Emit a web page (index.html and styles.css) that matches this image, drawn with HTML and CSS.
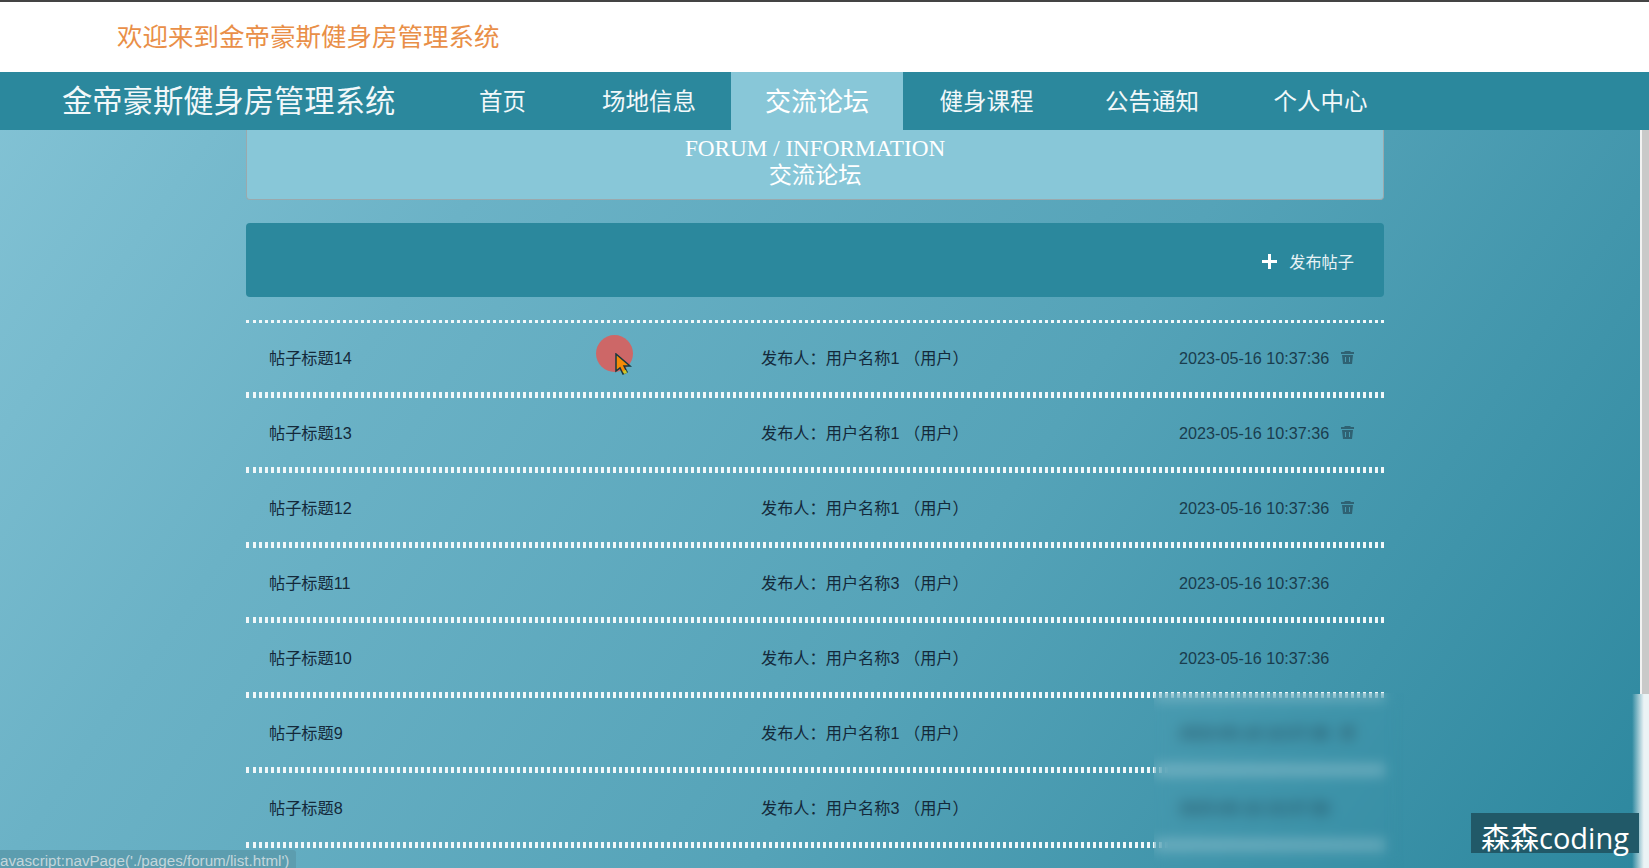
FILE: index.html
```html
<!DOCTYPE html>
<html lang="zh">
<head>
    <meta charset="UTF-8">
    <title>交流论坛</title>
    <link rel="stylesheet" href="styles.css">
</head>
<body>
    <div class="top">欢迎来到金帝豪斯健身房管理系统</div>
    <div class="nav">
        <div class="logo">金帝豪斯健身房管理系统</div>
        <ul class="menu">
            <li>首页</li>
            <li>场地信息</li>
            <li class="active">交流论坛</li>
            <li>健身课程</li>
            <li>公告通知</li>
            <li>个人中心</li>
        </ul>
    </div>
    <div class="main">
        <div class="title">
            <div class="title-en">FORUM / INFORMATION</div>
            <div class="title-cn">交流论坛</div>
        </div>
        <div class="bar">
            <span class="add">
                <svg width="15" height="15" viewBox="0 0 15 15"><path d="M6 0h3v6h6v3H9v6H6V9H0V6h6z" fill="#fff"/></svg>
                发布帖子
            </span>
        </div>
        <ul class="list">
            <li>
                <span>帖子标题14</span><span>发布人：用户名称1 （用户）</span><span>2023-05-16 10:37:36</span>
                <svg class="del" viewBox="0 0 15 15"><path d="M5 1h5l1 1h3v2H1V2h3zM2 5h11l-1 9H3zM5 7v5h1V7zm4 0v5h1V7z"/></svg>
            </li>
            <li>
                <span>帖子标题13</span><span>发布人：用户名称1 （用户）</span><span>2023-05-16 10:37:36</span>
                <svg class="del" viewBox="0 0 15 15"><path d="M5 1h5l1 1h3v2H1V2h3zM2 5h11l-1 9H3zM5 7v5h1V7zm4 0v5h1V7z"/></svg>
            </li>
            <li>
                <span>帖子标题12</span><span>发布人：用户名称1 （用户）</span><span>2023-05-16 10:37:36</span>
                <svg class="del" viewBox="0 0 15 15"><path d="M5 1h5l1 1h3v2H1V2h3zM2 5h11l-1 9H3zM5 7v5h1V7zm4 0v5h1V7z"/></svg>
            </li>
            <li>
                <span>帖子标题11</span><span>发布人：用户名称3 （用户）</span><span>2023-05-16 10:37:36</span>
            </li>
            <li>
                <span>帖子标题10</span><span>发布人：用户名称3 （用户）</span><span>2023-05-16 10:37:36</span>
            </li>
            <li>
                <span>帖子标题9</span><span>发布人：用户名称1 （用户）</span><span>2023-05-16 10:37:36</span>
                <svg class="del" viewBox="0 0 15 15"><path d="M5 1h5l1 1h3v2H1V2h3zM2 5h11l-1 9H3zM5 7v5h1V7zm4 0v5h1V7z"/></svg>
            </li>
            <li>
                <span>帖子标题8</span><span>发布人：用户名称3 （用户）</span><span>2023-05-16 10:37:36</span>
            </li>
        </ul>
        <div class="list-end"></div>
    </div>

    <div class="scroll"></div>
    <div class="blur"></div>
    <div class="edge"></div>
    <div class="status">avascript:navPage('./pages/forum/list.html')</div>
    <div class="mark">森森coding</div>
    <div class="pointer">
        <svg width="18" height="24" viewBox="0 0 18 24"><path d="M1 1v17l4-3 3 6 4-2-3-6h6z" fill="#f58a07" stroke="#17383f" stroke-width="1.5"/><path d="M8 18l3-1 1 3-3 1z" fill="#c9c92e"/></svg>
    </div>
</body>
</html>
```

FILE: styles.css
```css
*{
    padding: 0;
    margin: 0;
    box-sizing: border-box;
}
ul{
    list-style: none;
}
html,body{
    height: 868px;
    overflow: hidden;
}
body{
    font-family: "Liberation Sans", "Noto Sans CJK SC", sans-serif;
    font-size: 16.2px;
    color: #14293a;
    background: linear-gradient(125deg, #85c4d6 0%, #6bb2c6 27%, #55a3b8 60%, #2c879e 100%);
}
.top{
    height: 72px;
    border-top: 2px solid #444;
    background: #fff;
    padding-left: 117px;
    font-size: 25.5px;
    line-height: 70px;
    color: #e98f48;
}
.nav{
    height: 58px;
    background: #2b889d;
    color: #f2f8fa;
    display: flex;
}
.logo{
    width: 383px;
    margin-left: 62px;
    font-size: 30.3px;
    line-height: 60px;
    white-space: nowrap;
}
.menu{
    display: flex;
}
.menu li{
    width: 167px;
    text-align: center;
    font-size: 23.5px;
    line-height: 60px;
}
.menu li:nth-child(1){
    width: 115px;
}
.menu li:nth-child(2){
    width: 171px;
    padding-left: 7px;
}
.menu li:nth-child(5){
    padding-right: 3px;
}
.menu .active{
    width: 172px;
    font-size: 26px;
    background: #88c7d8;
    color: #fff;
}
.main{
    width: 1138px;
    margin-left: 246px;
}
.title{
    height: 70px;
    padding-top: 5px;
    background: #88c7d8;
    border: 1px solid #9aa9ad;
    border-top: 0;
    border-radius: 0 0 4px 4px;
    text-align: center;
    color: #fff;
    font-family: "Liberation Serif", "Noto Sans CJK SC", serif;
    font-size: 23.2px;
    line-height: 27px;
}
.bar{
    height: 74px;
    margin-top: 23px;
    padding: 2px 30px 0 0;
    background: #2b889d;
    border-radius: 4px;
    display: flex;
    justify-content: flex-end;
    align-items: center;
    color: #e8f3f6;
}
.add{
    display: flex;
    align-items: center;
    gap: 12px;
}
.list{
    margin-top: 23px;
}
.list li{
    height: 75px;
    padding: 0 29px 0 23px;
    border-top: 3px dotted #f1f8fa;
    border-bottom: 3px dotted #f1f8fa;
    display: grid;
    grid-template-columns: 492px 418px 151px 15px;
    align-items: center;
    line-height: 20px;
    white-space: nowrap;
}
.list li span:nth-child(3){
    color: #1a3d4e;
}
.list-end{
    border-top: 3px dotted #f1f8fa;
}
.del{
    width: 15px;
    height: 15px;
    margin-left: 10px;
    fill: #2f6273;
}
.scroll{
    position: absolute;
    left: 1640px;
    top: 130px;
    width: 9px;
    height: 564px;
    background: #c9c9c9;
    border-left: 2px solid #f2f2f2;
}
.blur{
    position: absolute;
    left: 1154px;
    top: 693px;
    width: 250px;
    height: 175px;
    backdrop-filter: blur(7px);
    -webkit-mask-image: linear-gradient(90deg, #000 92%, transparent);
    mask-image: linear-gradient(90deg, #000 92%, transparent);
}
.edge{
    position: absolute;
    left: 1632px;
    top: 694px;
    width: 17px;
    height: 174px;
    background: linear-gradient(90deg, rgba(235, 243, 245, 0), #ebf3f5 70%);
}
.status{
    position: absolute;
    left: 0;
    top: 850px;
    width: 296px;
    height: 18px;
    background: #5c9daf;
    border-radius: 0 3px 0 0;
    color: #c3d6db;
    font-size: 15.2px;
    line-height: 22px;
    overflow: hidden;
    white-space: nowrap;
}
.mark{
    position: absolute;
    left: 1471px;
    top: 813px;
    width: 168px;
    height: 40px;
    padding-left: 10px;
    background: #215968;
    color: #fff;
    font-family: "Open Sans", "Noto Sans CJK SC", sans-serif;
    font-size: 29px;
    line-height: 50px;
    white-space: nowrap;
}
.pointer{
    position: absolute;
    left: 596px;
    top: 335px;
    width: 37px;
    height: 37px;
    background: #cd6767;
    border-radius: 50%;
}
.pointer svg{
    position: absolute;
    left: 19px;
    top: 18px;
}
```
